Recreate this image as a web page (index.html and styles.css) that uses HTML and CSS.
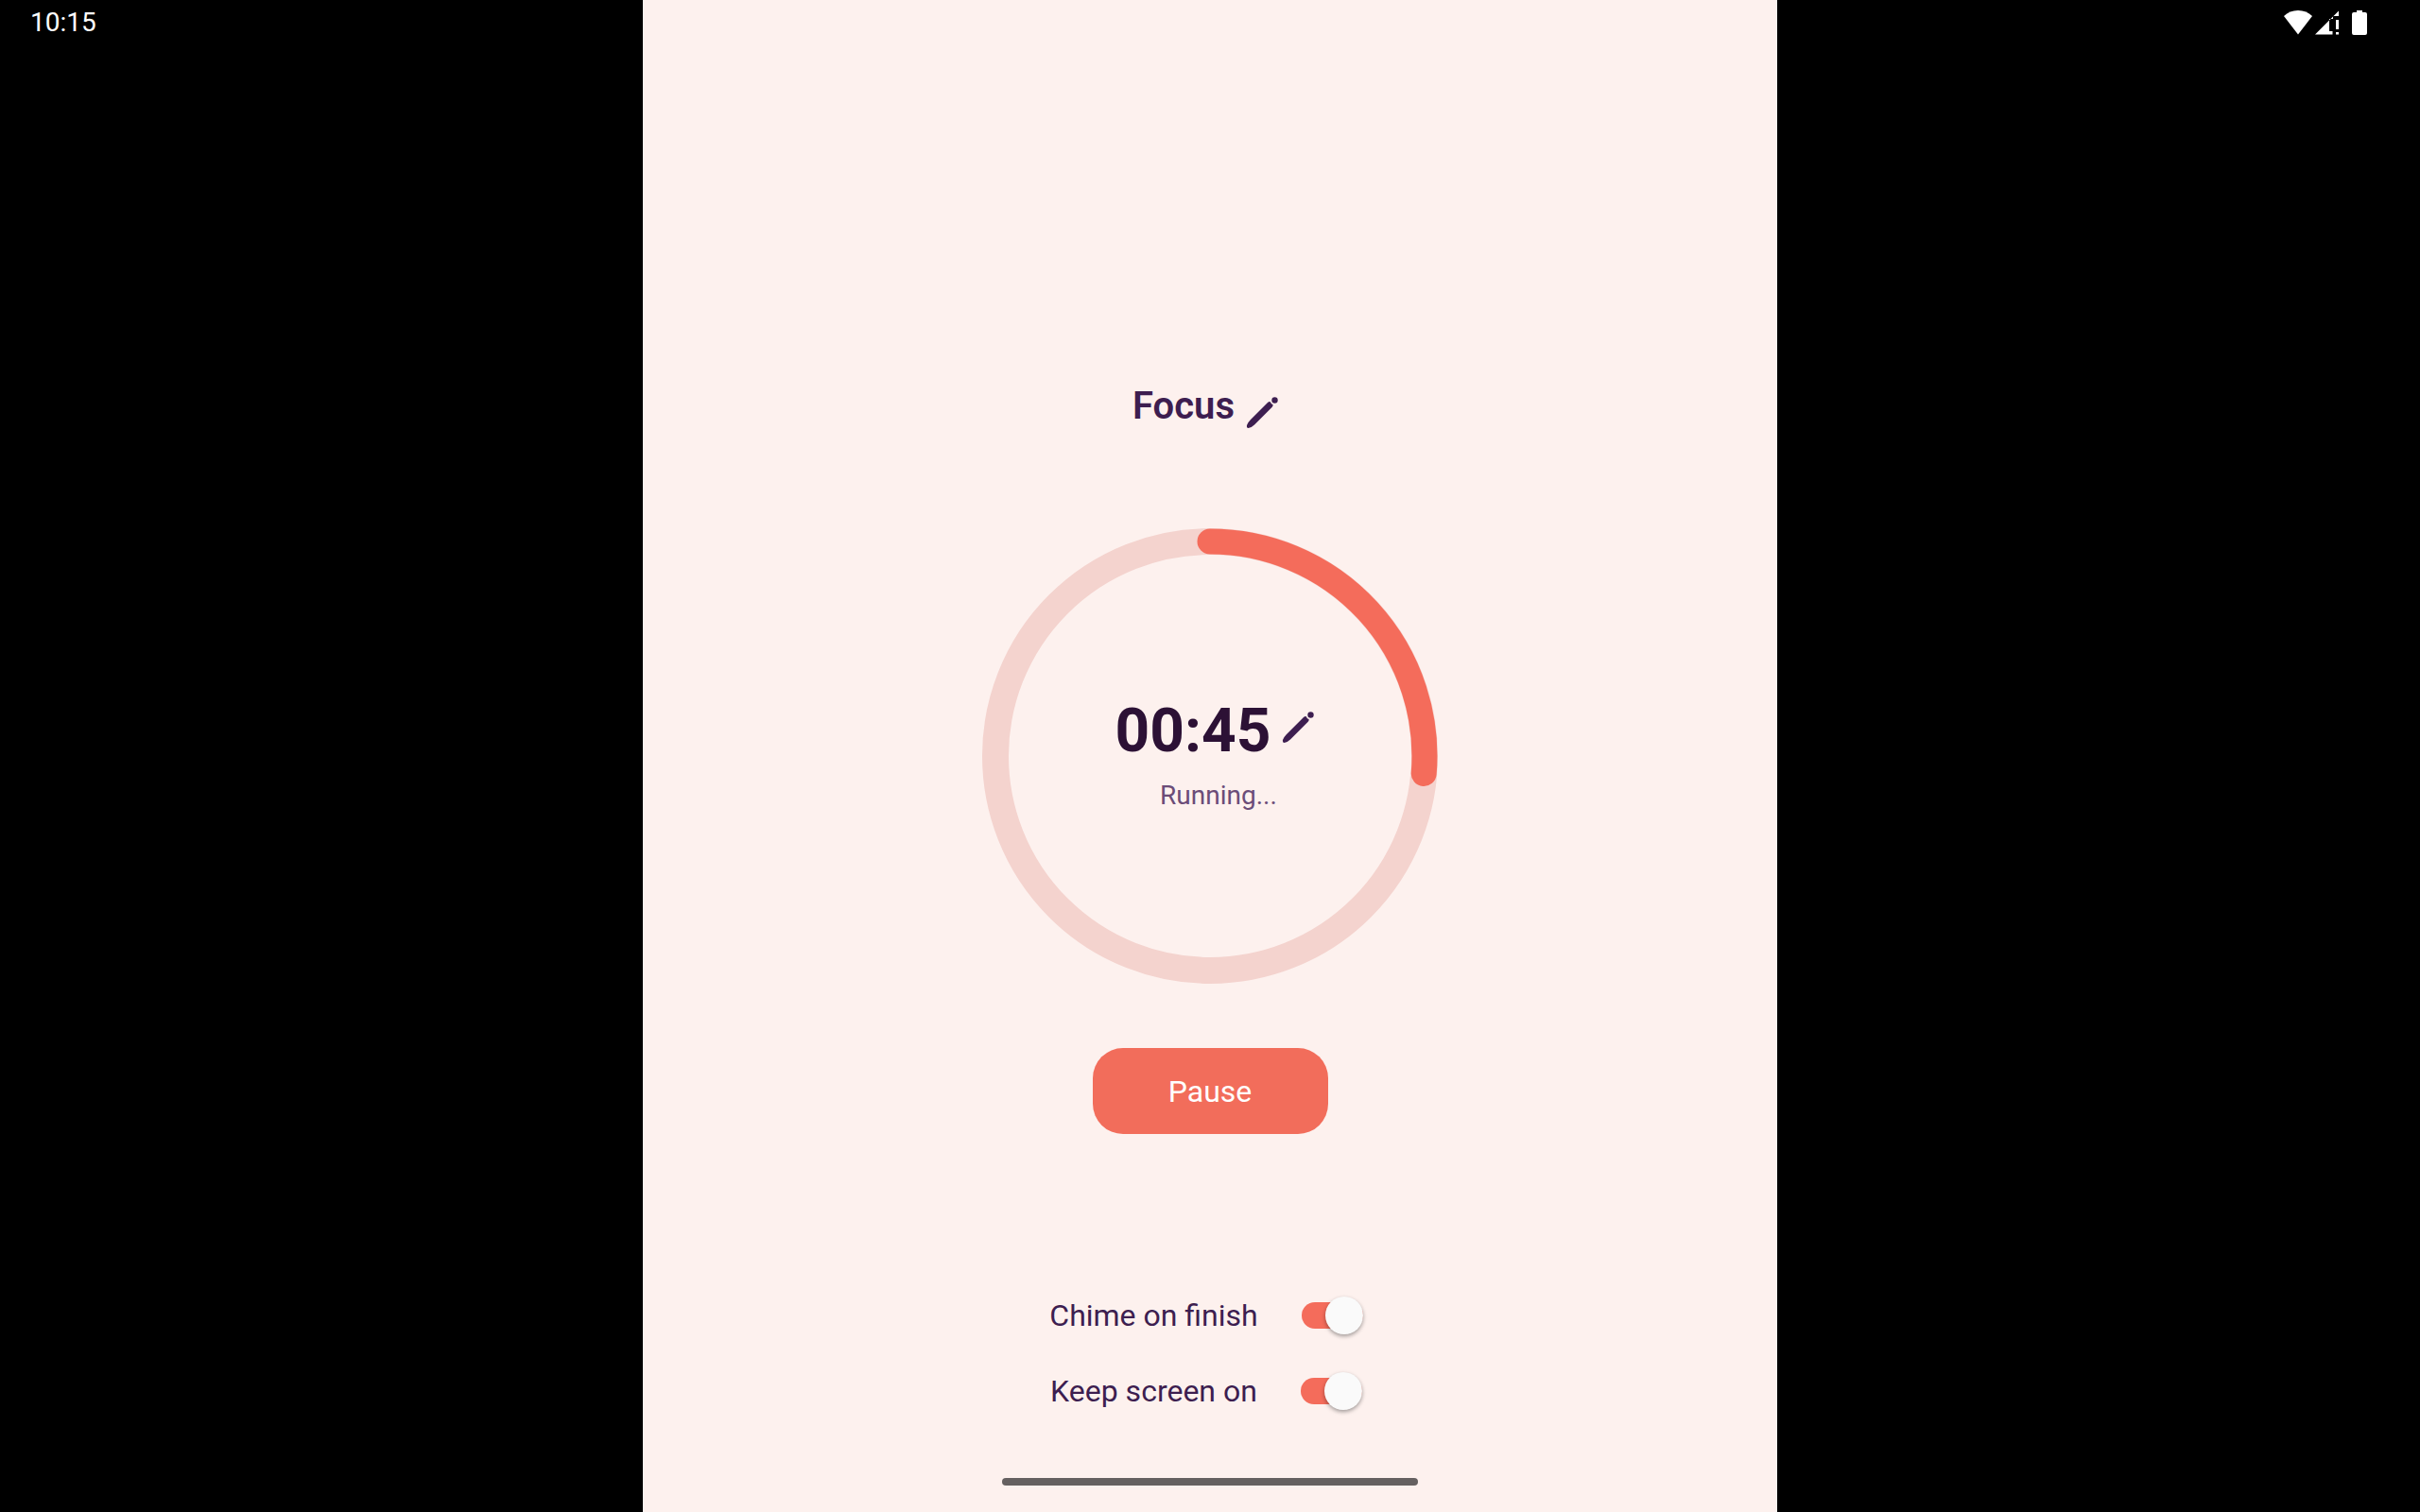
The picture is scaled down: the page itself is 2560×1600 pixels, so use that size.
FILE: index.html
```html
<!DOCTYPE html>
<html lang="en">
<head>
<meta charset="utf-8">
<meta name="viewport" content="width=device-width, initial-scale=1">
<title>Focus timer</title>
<link rel="stylesheet" href="styles.css">
</head>
<body>
<div class="screen">
  <div class="status status-left"><time>10:15</time></div>
  <main class="panel">
    <header class="title-row">
      <h1 class="title">Focus</h1>
      <button class="edit edit-title" type="button" aria-label="Edit name">
        <svg class="pencil" viewBox="0 0 34 34" aria-hidden="true"><path d="M1 30 Q2 27 5 24 L23 6 Q25 4.500 26 5.500 Q26.500 7.500 28.500 8 Q29 9.500 27.500 11 L9 29.500 Q6 32.500 2.500 33 Q0.500 33 1 30 Z"/><circle cx="30.500" cy="3.500" r="3.200"/></svg>
      </button>
    </header>
    <section class="dial">
      <svg class="ring" viewBox="0 0 482 482" aria-hidden="true">
        <circle class="track" cx="241" cy="241" r="227"/>
        <path class="progress" d="M241 14 A227 227 0 0 1 467.2 259.5"/>
      </svg>
      <div class="readout">
        <div class="time-row">
          <span class="time">00:45</span>
          <button class="edit edit-time" type="button" aria-label="Edit time">
            <svg class="pencil" viewBox="0 0 34 34" aria-hidden="true"><path d="M1 30 Q2 27 5 24 L23 6 Q25 4.500 26 5.500 Q26.500 7.500 28.500 8 Q29 9.500 27.500 11 L9 29.500 Q6 32.500 2.500 33 Q0.500 33 1 30 Z"/><circle cx="30.500" cy="3.500" r="3.200"/></svg>
          </button>
        </div>
        <p class="state">Running...</p>
      </div>
    </section>
    <button class="pause" type="button">Pause</button>
    <section class="options">
      <label class="option"><span>Chime on finish</span><input class="switch" type="checkbox" checked></label>
      <label class="option"><span>Keep screen on</span><input class="switch" type="checkbox" checked></label>
    </section>
    <div class="home-bar"></div>
  </main>
  <div class="status status-right">
    <svg class="wifi" viewBox="0 0 30 26" aria-hidden="true"><path d="M0 6 Q6 0 15 0 T30 6 L15 25.500 Z"/></svg>
    <svg class="signal" viewBox="0 0 26 26" aria-hidden="true"><path d="M0 25.500 L25 0.500 V6 H19 V9 H15 V22 H18.500 V25.500 Z M22 10 H25 V20 H22 Z M22 23 H25 V25.500 H22 Z"/></svg>
    <svg class="battery" viewBox="0 0 16 26" aria-hidden="true"><path d="M5 0 H11 V2 H14 Q16 2 16 4 V24 Q16 26 14 26 H2 Q0 26 0 24 V4 Q0 2 2 2 H5 Z"/></svg>
  </div>
</div>
</body>
</html>
```
FILE: styles.css
```css
* { box-sizing: border-box; }
body {
  margin: 0;
  background: #000;
  color: #3d1e50;
  font-family: Roboto, "Liberation Sans", sans-serif;
}
h1, p { margin: 0; }
button { border: 0; padding: 0; background: none; color: inherit; font: inherit; cursor: pointer; }
svg { display: block; }

.screen {
  display: grid;
  grid-template-columns: 1fr auto 1fr;
  min-height: 100vh;
}
.status {
  display: flex;
  align-items: center;
  height: 48px;
  color: #fff;
  fill: #fff;
  font-size: 28px;
}
.status-left { padding: 0 0 2px 32px; }
.status-right { justify-content: flex-end; padding-right: 56px; }
.wifi { width: 30px; height: 26px; margin-right: 3px; }
.signal { width: 26px; height: 26px; margin-right: 13px; }
.battery { width: 16px; height: 26px; }

.panel {
  display: flex;
  flex-direction: column;
  align-items: center;
  width: 75vh;
  padding: 400px 24px 28px;
  background: #fdf1ee;
}
.title-row {
  display: flex;
  align-items: center;
  gap: 12px;
  height: 60px;
  padding-right: 10px;
}
.title { font-size: 40px; line-height: 60px; font-weight: 600; }
.edit { display: block; }
.edit-title { padding-top: 14px; }
.edit-time { padding-bottom: 8px; }
.pencil { width: 34px; height: 34px; fill: #3d1e50; }

.dial { display: grid; place-items: center; margin-top: 99px; }
.ring, .readout { grid-area: 1 / 1; }
.ring { width: 482px; height: 482px; fill: none; }
.track { stroke: #f4d3ce; stroke-width: 28; }
.progress { stroke: #f46c5b; stroke-width: 27; stroke-linecap: round; }
.readout { display: flex; flex-direction: column; align-items: center; padding: 8px 0 0 10px; }
.time-row { display: flex; align-items: center; gap: 12px; }
.time { color: #2c1135; font-size: 64px; line-height: 76px; font-weight: 700; }
.state { color: #6b4c78; font-size: 28px; line-height: 60px; padding-left: 8px; }

.pause {
  width: 249px;
  height: 91px;
  margin-top: 68px;
  border-radius: 32px;
  background: #f26d5b;
  color: #fff;
  font-size: 32px;
}
.options {
  display: flex;
  flex-direction: column;
  align-items: center;
  gap: 40px;
  margin-top: 172px;
}
.option { display: flex; align-items: center; gap: 46px; height: 40px; padding-right: 8px; font-size: 32px; }
.switch {
  appearance: none;
  display: flex;
  align-items: center;
  justify-content: flex-end;
  width: 65px;
  height: 28px;
  margin: 0;
  border-radius: 14px;
  background: #f46c5b;
}
.switch:not(:checked) { justify-content: flex-start; background: #b9aab0; }
.switch::before {
  content: "";
  width: 40px;
  height: 40px;
  flex: none;
  border-radius: 50%;
  background: #fafafa;
  box-shadow: 0 2px 4px rgba(0, 0, 0, 0.36);
}
.home-bar {
  width: 440px;
  height: 8px;
  margin-top: auto;
  border-radius: 4px;
  background: #656060;
}
```
